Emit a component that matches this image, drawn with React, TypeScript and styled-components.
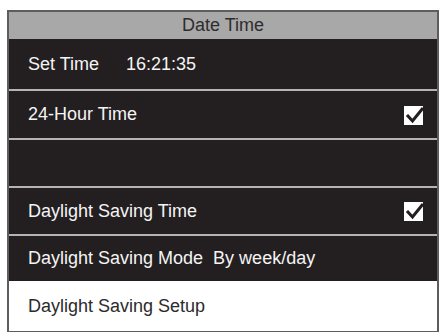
import * as React from 'react';
import styled, { createGlobalStyle } from 'styled-components';

const Global = createGlobalStyle`
    html, body {
        margin: 0;
        padding: 0;
        background: #ffffff;
    }
    body {
        font-family: "Liberation Sans", Arial, sans-serif;
    }
`;

const Check = () => (
    <svg width="22" height="22" viewBox="0 0 22 22">
        <rect x="1" y="2" width="19" height="19" fill="#ffffff" />
        <path d="M4 11 L9.5 17 L20 4" fill="none" stroke="#231f20" strokeWidth="3" />
    </svg>
);

const rows = [
    { label: 'Set Time', value: '16:21:35', gap: 27, check: false, height: 50 },
    { label: '24-Hour Time', check: true, height: 47 },
    { label: '', check: false, height: 46 },
    { label: 'Daylight Saving Time', check: true, height: 46 },
    { label: 'Daylight Saving Mode', value: 'By week/day', gap: 10, check: false, height: 45 },
];

export default function App() {
    return (
        <>
            <Global />
            <Page>
                <Panel>
                    <Header>Date Time</Header>
                    {rows.map((r, i) => (
                        <React.Fragment key={i}>
                            {i > 0 && <Separator />}
                            <Row $height={r.height}>
                                <Label>{r.label}</Label>
                                {r.value && <Value $gap={r.gap}>{r.value}</Value>}
                                {r.check && <Box><Check /></Box>}
                            </Row>
                        </React.Fragment>
                    ))}
                    <Row $height={50} $light>
                        <Label>Daylight Saving Setup</Label>
                    </Row>
                </Panel>
            </Page>
        </>
    );
}

const Page = styled.div`
    width: 443px;
    height: 332px;
    padding: 10px 4px 0 7px;
    box-sizing: border-box;
`;

const Panel = styled.div`
    width: 432px;
    border: 2px solid #5e5c5d;
    box-sizing: border-box;
    background: #231f20;
    display: flex;
    flex-direction: column;
`;

const Header = styled.div`
    height: 27px;
    background: #a8a8a8;
    color: #2e2c2d;
    font-size: 18px;
    display: flex;
    align-items: center;
    justify-content: center;
`;

const Separator = styled.div`
    height: 2px;
    background: #b4b4b4;
`;

const Row = styled.div<{ $height: number; $light?: boolean }>`
    height: ${(p) => p.$height}px;
    background: ${(p) => (p.$light ? '#ffffff' : '#231f20')};
    color: ${(p) => (p.$light ? '#2b2b2b' : '#f4f4f4')};
    font-size: 18px;
    display: flex;
    align-items: center;
    padding: 0 12px 0 19px;
`;

const Label = styled.span``;

const Value = styled.span<{ $gap: number }>`
    margin-left: ${(p) => p.$gap}px;
`;

const Box = styled.div`
    margin-left: auto;
    display: flex;
`;
